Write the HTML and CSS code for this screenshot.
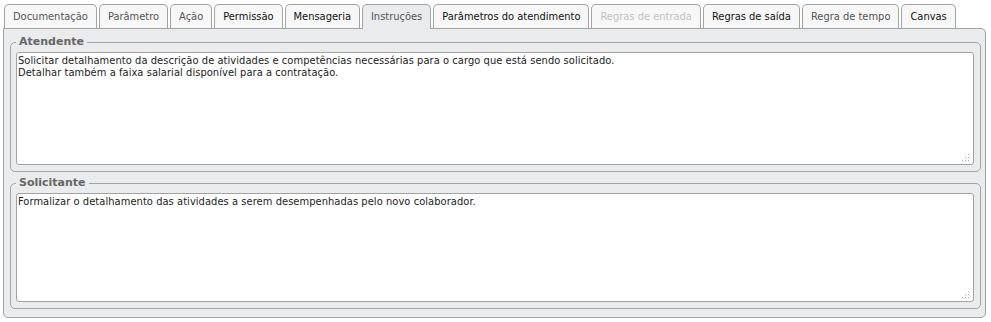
FILE: index.html
```html
<!DOCTYPE html>
<html lang="pt-BR">
<head>
<meta charset="utf-8">
<title>Instruções</title>
<link rel="stylesheet" href="styles.css">
</head>
<body>
<div class="tabs">
  <div class="tab muted">Documentação</div>
  <div class="tab muted">Parâmetro</div>
  <div class="tab muted">Ação</div>
  <div class="tab">Permissão</div>
  <div class="tab">Mensageria</div>
  <div class="tab active">Instruções</div>
  <div class="tab">Parâmetros do atendimento</div>
  <div class="tab disabled">Regras de entrada</div>
  <div class="tab">Regras de saída</div>
  <div class="tab muted">Regra de tempo</div>
  <div class="tab">Canvas</div>
</div>
<div class="panel">
  <fieldset class="group">
    <legend>Atendente</legend>
    <div class="field">
      <textarea class="text tall">Solicitar detalhamento da descrição de atividades e competências necessárias para o cargo que está sendo solicitado.
Detalhar também a faixa salarial disponível para a contratação.</textarea>
      <svg class="grip" width="8" height="8" viewBox="0 0 8 8"><g fill="#b4b4b4"><rect x="6" y="0" width="1" height="1"/><rect x="3" y="3" width="1" height="1"/><rect x="6" y="3" width="1" height="1"/><rect x="0" y="6" width="1" height="1"/><rect x="3" y="6" width="1" height="1"/><rect x="6" y="6" width="1" height="1"/></g><g fill="#dcdcdc"><rect x="7" y="1" width="1" height="1"/><rect x="4" y="4" width="1" height="1"/><rect x="7" y="4" width="1" height="1"/><rect x="1" y="7" width="1" height="1"/><rect x="4" y="7" width="1" height="1"/><rect x="7" y="7" width="1" height="1"/></g></svg>
    </div>
  </fieldset>
  <fieldset class="group">
    <legend>Solicitante</legend>
    <div class="field">
      <textarea class="text short">Formalizar o detalhamento das atividades a serem desempenhadas pelo novo colaborador.</textarea>
      <svg class="grip" width="8" height="8" viewBox="0 0 8 8"><g fill="#b4b4b4"><rect x="6" y="0" width="1" height="1"/><rect x="3" y="3" width="1" height="1"/><rect x="6" y="3" width="1" height="1"/><rect x="0" y="6" width="1" height="1"/><rect x="3" y="6" width="1" height="1"/><rect x="6" y="6" width="1" height="1"/></g><g fill="#dcdcdc"><rect x="7" y="1" width="1" height="1"/><rect x="4" y="4" width="1" height="1"/><rect x="7" y="4" width="1" height="1"/><rect x="1" y="7" width="1" height="1"/><rect x="4" y="7" width="1" height="1"/><rect x="7" y="7" width="1" height="1"/></g></svg>
    </div>
  </fieldset>
</div>
</body>
</html>
```

FILE: styles.css
```css
html, body {
  margin: 0;
  padding: 0;
  background: #ffffff;
}

body {
  font-family: "DejaVu Sans Condensed", "DejaVu Sans", sans-serif;
  font-size: 11px;
  color: #222;
}

.tabs {
  display: flex;
  align-items: flex-end;
  gap: 2px;
  padding: 4px 0 0 4px;
  height: 24px;
  box-sizing: content-box;
  position: relative;
  z-index: 1;
}

.tab {
  height: 23px;
  line-height: 23px;
  padding: 0 8px;
  border: 1px solid #a3a3a3;
  border-bottom: none;
  border-radius: 5px 5px 0 0;
  background: #f7f7f7;
  color: #111;
  white-space: nowrap;
}

.tab.muted {
  color: #555;
}

.tab.disabled {
  color: #c2c2c2;
}

.tab.active {
  background: #e9ebec;
  color: #555;
  height: 24px;
  margin-bottom: -1px;
}

.panel {
  margin: 0 5px 0 3px;
  border: 1px solid #a3a3a3;
  border-radius: 0 5px 5px 5px;
  background: #e9ebec;
  padding: 6px 4px 8px 6px;
  display: flex;
  flex-direction: column;
  gap: 4px;
}

.group {
  margin: 0;
  padding: 3px 6px 6px 5px;
  border: 1px solid #a3a3a3;
  border-radius: 5px;
  min-width: 0;
}

.group legend {
  padding: 0 3px;
  margin-left: 0;
  font-family: "DejaVu Sans", sans-serif;
  font-weight: bold;
  font-size: 11px;
  line-height: 14px;
  color: #666;
}

.field {
  position: relative;
}

.text {
  display: block;
  box-sizing: border-box;
  width: 100%;
  margin: 0;
  padding: 2px 1px;
  border: 1px solid #a3a3a3;
  border-radius: 3px;
  background: #ffffff;
  font-family: "DejaVu Sans Condensed", "DejaVu Sans", sans-serif;
  font-size: 11px;
  letter-spacing: 0.06px;
  line-height: 12px;
  color: #222;
  resize: none;
  outline: none;
  overflow: hidden;
}

.tall {
  height: 113px;
}

.short {
  height: 109px;
}

.grip {
  position: absolute;
  right: 4px;
  bottom: 3px;
}
```
